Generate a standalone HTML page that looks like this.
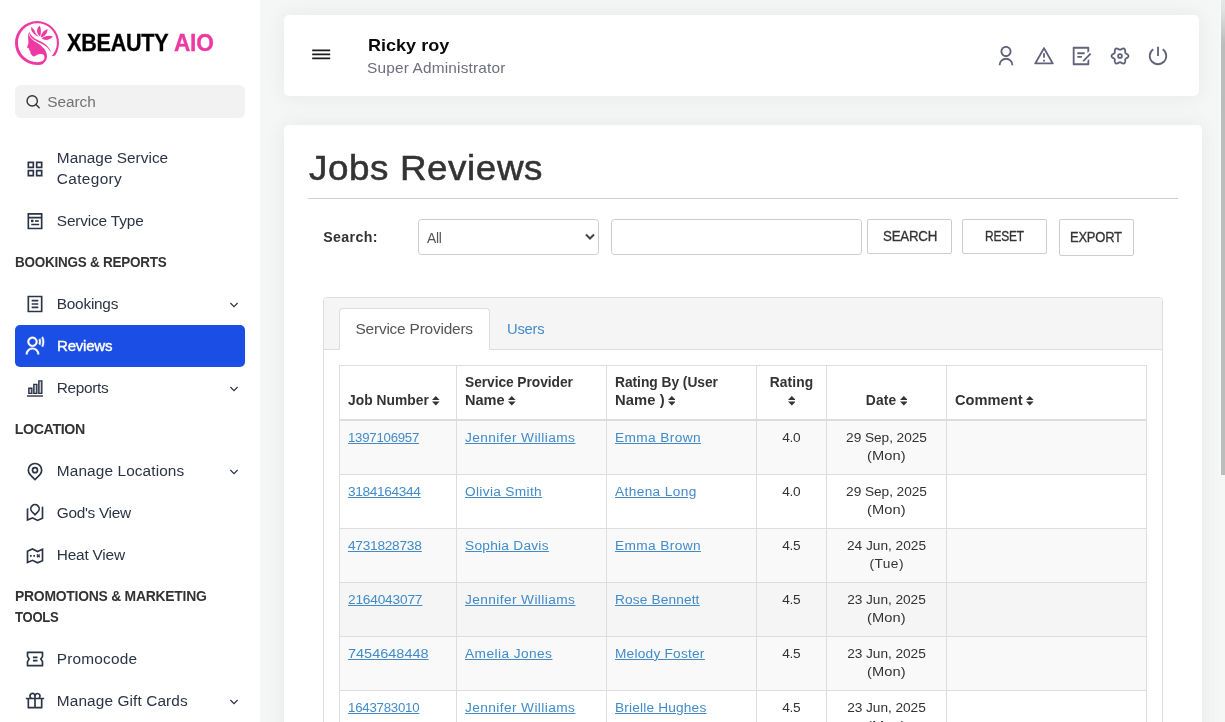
<!DOCTYPE html>
<html lang="en">
<head>
<meta charset="utf-8">
<title>Jobs Reviews</title>
<style>
*{box-sizing:border-box;}
html,body{margin:0;padding:0;}
body{width:1225px;height:722px;overflow:hidden;position:relative;background:#f5f6f6;font-family:"Liberation Sans",sans-serif;color:#333;}
a{color:#428bca;text-decoration:underline;text-underline-offset:1px;}
span{white-space:nowrap;}
a span{text-decoration:underline;text-underline-offset:1px;}
/* ---------- sidebar ---------- */
#wrap{position:absolute;left:0;top:0;width:1225px;height:722px;will-change:transform;}
#side{position:absolute;left:0;top:0;width:260px;height:722px;background:#fff;overflow:hidden;}
#logo{position:absolute;left:15px;top:21px;width:44px;height:44px;}
#brand{position:absolute;left:67px;top:29.6px;font-size:23.9px;line-height:26px;font-weight:700;color:#000;white-space:nowrap;-webkit-text-stroke:.35px #000;}
#brand b{color:#ee38a2;position:absolute;left:107.3px;top:0;-webkit-text-stroke:.35px #ee38a2;}
#sbox{position:absolute;left:15px;top:85px;width:230px;height:33px;border-radius:6px;background:#f2f2f2;}
#sbox svg{position:absolute;left:10px;top:8.5px;}
#sbox span{position:absolute;left:32.3px;top:.5px;line-height:32px;font-size:15.4px;color:#727272;}
#menu{position:absolute;left:15px;top:137px;width:230px;}
.it{position:relative;height:42px;border-radius:5px;color:#2b3445;font-size:15.4px;line-height:21px;}
.it.two{height:63px;}
.it svg.ic{position:absolute;left:10px;top:11px;width:20px;height:20px;fill:none;stroke:#2b3445;stroke-width:2;}
.it.two svg.ic{top:21.8px;}
.it span{position:absolute;left:41.8px;top:9.5px;}
.it.two span.l2{top:30.5px;}
.it svg.ch{position:absolute;left:213.2px;top:17.5px;width:12px;height:8px;}
.it.act{background:#1b4ee4;color:#fff;}
.it.act span{-webkit-text-stroke:.4px #fff;}
.it.act svg.ic{stroke:#fff;stroke-width:.5;fill:#fff;}
.hd{position:relative;height:41px;font-size:14.2px;font-weight:700;color:#333;line-height:21px;}
.hd span{position:absolute;left:-.3px;top:10px;}
.hd span.l2{top:31px;}
.hd.two{height:62px;}
/* ---------- top bar ---------- */
#top{position:absolute;left:284px;top:15px;width:915px;height:81px;background:#fff;border-radius:5px;box-shadow:0 0 18px rgba(196,204,204,.3);}
#burger{position:absolute;left:28px;top:32px;width:19px;height:14px;}
#uname{position:absolute;left:83.6px;top:21px;font-size:17px;line-height:20px;font-weight:700;color:#0a0a0a;}
#urole{position:absolute;left:82.8px;top:43px;font-size:14.4px;line-height:20px;color:#6e6e80;}
.ti{position:absolute;top:30.2px;width:22px;height:22px;fill:#62627a;}
/* ---------- main ---------- */
#main{position:absolute;left:284px;top:125px;width:918px;height:620px;background:#fff;border-radius:5px 5px 0 0;box-shadow:0 0 18px rgba(196,204,204,.3);}
h1{position:absolute;left:25px;top:21.5px;margin:0;font-size:34.4px;line-height:42px;font-weight:400;color:#333;white-space:nowrap;-webkit-text-stroke:.55px #333;}
#hr{position:absolute;left:24px;top:73px;width:870px;height:1px;background:#cfcfcf;}
#lbl{position:absolute;left:39.3px;top:102px;font-size:14.2px;font-weight:700;line-height:20px;color:#333;}
.ctl{position:absolute;top:94px;height:36px;border:1px solid #ccc;border-radius:3.500px;background:#fff;}
#sel span{position:absolute;left:7.7px;top:7.5px;font-size:14.2px;line-height:20px;color:#555;}
#sel svg{position:absolute;right:2px;top:12.8px;}
.btn{position:absolute;top:94px;height:35px;border:1px solid #ccc;border-radius:2px;background:#fff;font-size:14.2px;line-height:20px;color:#333;-webkit-text-stroke:.3px #333;}
.btn span{position:absolute;top:6px;}
/* panel */
#panel{position:absolute;left:39px;top:172px;width:840px;height:460px;border:1px solid #ddd;border-radius:4px 4px 0 0;background:#fff;}
#phead{position:absolute;left:0;top:0;width:838px;height:52px;background:#f5f5f5;border-bottom:1px solid #ddd;border-radius:3px 3px 0 0;}
#tab1{position:absolute;left:15px;top:10px;width:151px;height:42px;background:#fff;border:1px solid #ddd;border-bottom-color:#fff;border-radius:4px 4px 0 0;font-size:15.4px;line-height:20px;color:#555;}
#tab1 span{position:absolute;left:15.5px;top:10px;}
#tab2{position:absolute;left:182.8px;top:21px;font-size:15.4px;line-height:20px;color:#428bca;}
table{position:absolute;left:15px;top:67px;width:807px;border-collapse:collapse;table-layout:fixed;font-size:13.3px;line-height:18px;color:#333;}
th,td{border:1px solid #ddd;padding:8px 8px;vertical-align:top;text-align:left;}
th{vertical-align:bottom;height:53px;font-size:13.8px;border-bottom:2px solid #ddd;font-weight:700;white-space:nowrap;padding-bottom:9px;padding-top:8px;}
td{height:54px;padding-top:8px;font-size:13.7px;}
tr.s td{background:#f9f9f9;}
tr.h td{background:#f5f5f5;}
.c{text-align:center;}
.so{display:inline-block;width:7.6px;height:9.6px;margin-left:3.4px;position:relative;top:.8px;fill:#333;}
#sbar{position:absolute;left:1221px;top:0;width:4px;height:475px;box-shadow:-1.5px 0 0 #f9f9f9;background:linear-gradient(#e6e6e6 0,#e2e2e2 9px,#bcbcbc 44px);}
</style>
</head>
<body><div id="wrap">
<div id="side">
  <svg id="logo" viewBox="0 0 44 44">
    <g fill="#ee38a2">
    <path fill-rule="evenodd" d="M22 0a22 22 0 1 0 0 44a22 22 0 1 0 0-44zM22.400 2.300a19.500 19.500 0 1 1 0 39a19.500 19.500 0 1 1 0-39z"/>
    <path d="M33.800 35.600L41.500 34.600L46 46L28 46L28.500 39.500z" fill="#fff"/>
    <path d="M13.600 11.300C13 13.500 13.100 15.800 13.200 17.900C13.300 19.600 13.500 21.200 13.400 22.600L12 26.600L14 27.600L14.300 29.300L15.400 30.600L15.400 32.200L16.900 34.200L18.300 35.600C19.200 35.300 20 34.800 20.900 34.400C22.100 33.800 23.400 33.300 24.600 33.100C25.600 32.900 26.600 32.900 27.300 33.200C28.400 33.600 29.100 34.300 29.300 35.200C29.600 36.400 29.500 37.600 28.900 38.600C28.400 39.500 27.600 40.200 26.600 40.600C25.600 41.100 24.500 41.300 23.300 41.400L23 43.900C24.600 43.800 26 43.400 27.300 42.700C28.400 42.300 29.300 41.700 29.900 40.900C30.700 40 31.300 39 31.600 37.900C32 36.600 32.100 35.200 31.900 33.900C31.700 32.500 31.300 31.200 30.600 29.900C29.900 28.700 29 27.600 27.900 26.600C26.900 25.500 25.800 24.500 24.600 23.600C23.100 22.500 21.500 21.500 19.900 20.600C18.500 19.700 17.200 18.600 16 17.300C15.200 16.300 14.500 15.200 14 14C13.800 13.100 13.600 12.200 13.600 11.300z"/>
    <path d="M14.300 10.600C15.100 12.800 16.300 14.600 17.900 16C19.900 17.700 22.300 18.800 24.600 19.900C27 21 29.300 22.200 31.200 23.900C32.600 25.100 33.700 26.400 34.600 27.900C35.300 29.100 35.700 30.300 35.900 31.800C35.400 30.500 34.700 29.400 33.900 28.400C32.900 27.100 31.700 26 30.400 25.100C28.600 23.800 26.600 22.800 24.600 21.800C22.300 20.700 19.900 19.600 17.800 18C15.900 16.400 14.500 14.200 14.100 11.800z"/>
    <path d="M18.600 12.400C16.600 10.600 15.700 8.400 16.300 6C18.200 7.400 19.700 9.400 20.400 11.800C21 13 22.200 14.400 23.800 15.600C21.800 15 20 13.900 18.600 12.400z"/>
    <path d="M24.600 4.600C26.200 8 26.300 11.400 25.300 15.600C24.900 15.300 24.300 14.800 23.600 14.300C21.300 11.300 21.700 7.600 24.600 4.600z"/>
    <path d="M32.600 8C32.600 11.200 31.200 14 27.300 16.300L25.900 16.200C26 12.600 28.600 9.600 32.600 8z"/>
    <path d="M37.900 15.400C35.800 18 33 19.200 29.600 18.800C28.600 18.500 27.700 18 26.800 17.400C29.600 14.600 34.200 14.200 37.900 15.400z"/>
    </g>
  </svg>
  <div id="brand"><span style="display:inline-block;transform-origin:0 50%;transform:scaleX(0.902);letter-spacing:-0.25px;margin-right:-10.82px">XBEAUTY</span><b><span style="display:inline-block;transform-origin:0 50%;transform:scaleX(0.948);letter-spacing:-0.25px;margin-right:-1.93px">AIO</span></b></div>
  <div id="sbox"><svg width="17" height="17" viewBox="0 0 17 17"><circle cx="7.200" cy="6.900" r="5.150" fill="none" stroke="#333" stroke-width="1.400"/><path d="M10.900 10.600l3.300 3.200" stroke="#333" stroke-width="1.400" stroke-linecap="round"/></svg><span style="letter-spacing:-0.05px;margin-right:0.05px">Search</span></div>
  <div id="menu">
    <div class="it two"><svg class="ic" viewBox="0 0 24 24"><path d="M4 4h6v6H4zM14 4h6v6h-6zM4 14h6v6H4zM14 14h6v6h-6z"/></svg><span style="letter-spacing:0.01px;margin-right:-0.01px">Manage Service</span><span class="l2" style="letter-spacing:0.36px;margin-right:-0.36px">Category</span></div>
    <div class="it"><svg class="ic" viewBox="0 0 24 24"><path d="M4 3.4h16v17.6H4zM4 8h16M7.5 16.2h9.5"/><path d="M7.2 10.4h3v3h-3z" fill="#2b3445" stroke="none"/><path d="M12 12h4.5"/></svg><span style="letter-spacing:-0.16px;margin-right:0.16px">Service Type</span></div>
    <div class="hd"><span style="display:inline-block;transform-origin:0 50%;transform:scaleX(0.950);letter-spacing:-0.25px;margin-right:-7.67px">BOOKINGS &amp; REPORTS</span></div>
    <div class="it"><svg class="ic" viewBox="0 0 24 24"><path d="M4 3h16v18H4zM8 8h8M8 12h8M8 16h8"/></svg><span style="letter-spacing:-0.25px;margin-right:0.25px">Bookings</span><svg class="ch" viewBox="0 0 12 8"><path d="M2.4 2l3.6 3.6L9.6 2" fill="none" stroke="#2b3445" stroke-width="1.200"/></svg></div>
    <div class="it act"><svg class="ic" viewBox="0 0 24 24"><path d="M1 22a8 8 0 1 1 16 0h-2a6 6 0 1 0-12 0H1zm8-9c-3.315 0-6-2.685-6-6s2.685-6 6-6 6 2.685 6 6-2.685 6-6 6zm0-2c2.21 0 4-1.79 4-4s-1.79-4-4-4-4 1.79-4 4 1.79 4 4 4zM21.548.784A13.942 13.942 0 0 1 23 7c0 2.233-.523 4.344-1.452 6.216l-1.645-1.196A11.955 11.955 0 0 0 21 7c0-1.807-.4-3.52-1.097-5.02L21.548.784zm-3.302 2.4A9.97 9.97 0 0 1 19 7a9.97 9.97 0 0 1-.754 3.816l-1.677-1.22A7.99 7.99 0 0 0 17 7a7.99 7.99 0 0 0-.43-2.596l1.676-1.22z"/></svg><span style="display:inline-block;transform-origin:0 50%;transform:scaleX(0.979);letter-spacing:-0.25px;margin-right:-0.92px">Reviews</span></div>
    <div class="it"><svg class="ic" viewBox="0 0 24 24"><path d="M4.6 12.2h3.6v6.2H4.6zM10.6 7.6h3.6v10.8h-3.6zM16.6 3.4h3.6v15h-3.6z" stroke-width="1.7" fill="#c9ccd2"/><path d="M2.4 21.6h19.2" stroke-width="1.7"/></svg><span style="letter-spacing:-0.32px;margin-right:0.32px">Reports</span><svg class="ch" viewBox="0 0 12 8"><path d="M2.4 2l3.6 3.6L9.6 2" fill="none" stroke="#2b3445" stroke-width="1.200"/></svg></div>
    <div class="hd"><span style="letter-spacing:-0.36px;margin-right:0.36px">LOCATION</span></div>
    <div class="it"><svg class="ic" viewBox="0 0 24 24"><path d="M12 22.3l-5.66-5.66a8 8 0 1 1 11.32 0z"/><circle cx="12" cy="11" r="3"/></svg><span style="letter-spacing:0.11px;margin-right:-0.11px">Manage Locations</span><svg class="ch" viewBox="0 0 12 8"><path d="M2.4 2l3.6 3.6L9.6 2" fill="none" stroke="#2b3445" stroke-width="1.200"/></svg></div>
    <div class="it"><svg class="ic" viewBox="0 0 24 24" style="stroke:none;fill:#2b3445"><path d="M4 6.143v12.824l5.065-2.17 6 3L20 17.68V4.857l1.303-.558a.5.5 0 0 1 .697.46V19l-7 3-6-3-6.303 2.701a.5.5 0 0 1-.697-.46V7l2-.857zm12.243 5.1L12 15.485l-4.243-4.242a6 6 0 1 1 8.486 0zM12 12.657l2.828-2.829a4 4 0 1 0-5.656 0L12 12.657z"/></svg><span style="letter-spacing:-0.31px;margin-right:0.31px">God's View</span></div>
    <div class="it"><svg class="ic" viewBox="0 0 24 24"><path d="M3 7.400l6-2.600 6 3 6-2.600v13.600l-6 2.600-6-3-6 2.600z"/><path d="M6 13h2M10 13h2" /><path d="M14.3 11.3l3.4 3.4M17.7 11.3l-3.4 3.4" stroke-width="1.6"/></svg><span style="letter-spacing:-0.20px;margin-right:0.20px">Heat View</span></div>
    <div class="hd two"><span style="display:inline-block;transform-origin:0 50%;transform:scaleX(0.980);letter-spacing:-0.25px;margin-right:-3.70px">PROMOTIONS &amp; MARKETING</span><span class="l2" style="display:inline-block;transform-origin:0 50%;transform:scaleX(0.920);letter-spacing:-0.25px;margin-right:-3.58px">TOOLS</span></div>
    <div class="it"><svg class="ic" viewBox="0 0 24 24"><path d="M3 4h18v4.800l-2 3.200 2 3.200V20H3v-4.800l2-3.200L3 8.800z" stroke-linejoin="round"/><path d="M9.500 10h5.5M9.500 14h5.500"/></svg><span style="letter-spacing:0.19px;margin-right:-0.19px">Promocode</span></div>
    <div class="it"><svg class="ic" viewBox="0 0 24 24" style="stroke:none;fill:#2b3445"><path d="M15 2a4 4 0 0 1 3.464 6.001L23 8v2h-2v10a1 1 0 0 1-1 1H4a1 1 0 0 1-1-1V10H1V8l4.536.001A4 4 0 0 1 12 3.355 3.983 3.983 0 0 1 15 2zm-4 8H5v9h6v-9zm8 0h-6v9h6v-9zM9 4a2 2 0 0 0-.15 3.995L9 8h2V6a2 2 0 0 0-1.697-1.977l-.154-.018L9 4zm6 0a2 2 0 0 0-1.995 1.850L13 6v2h2a2 2 0 0 0 1.995-1.850L17 6a2 2 0 0 0-2-2z"/></svg><span style="letter-spacing:0.11px;margin-right:-0.11px">Manage Gift Cards</span><svg class="ch" viewBox="0 0 12 8"><path d="M2.4 2l3.6 3.6L9.6 2" fill="none" stroke="#2b3445" stroke-width="1.200"/></svg></div>
  </div>
</div>

<div id="top">
  <svg id="burger" viewBox="0 0 19 14"><path d="M.2 3.300h18M.2 7.300h18M.2 11.400h18" stroke="#1c1c1c" stroke-width="1.700" fill="none"/></svg>
  <div id="uname"><span style="display:inline-block;transform-origin:0 50%;transform:scaleX(1.061);letter-spacing:0.00px;margin-right:4.65px">Ricky roy</span></div>
  <div id="urole"><span style="display:inline-block;transform-origin:0 50%;transform:scaleX(1.070);letter-spacing:0.16px;margin-right:8.89px">Super Administrator</span></div>
  <svg class="ti" style="left:711px" viewBox="0 0 24 24"><path d="M4 22a8 8 0 1 1 16 0h-2a6 6 0 1 0-12 0H4zm8-9c-3.315 0-6-2.685-6-6s2.685-6 6-6 6 2.685 6 6-2.685 6-6 6zm0-2c2.210 0 4-1.790 4-4s-1.790-4-4-4-4 1.790-4 4 1.790 4 4 4z"/></svg>
  <svg class="ti" style="left:749px" viewBox="0 0 24 24"><path d="M12.866 3l9.526 16.500a1 1 0 0 1-.866 1.500H2.474a1 1 0 0 1-.866-1.500L11.134 3a1 1 0 0 1 1.732 0zM4.206 19h15.588L12 5.500 4.206 19zM11 16h2v2h-2v-2zm0-7h2v5h-2V9z"/></svg>
  <svg class="ti" style="left:786.2px" viewBox="0 0 24 24"><path d="M20 2a1 1 0 0 1 1 1v3.757l-2 2V4H5v16h14v-2.758l2-2V21a1 1 0 0 1-1 1H4a1 1 0 0 1-1-1V3a1 1 0 0 1 1-1h16zm1.778 6.808l1.414 1.414L15.414 18l-1.416-.002.002-1.412 7.778-7.778zM13 12v2H8v-2h5zm3-4v2H8V8h8z"/></svg>
  <svg class="ti" style="left:825px;fill:none;stroke:#62627a;stroke-width:2;stroke-linejoin:round" viewBox="0 0 24 24"><path d="M21.2 12.0L21.0 12.8L20.5 13.5L19.7 14.1L18.9 14.5L18.3 14.9L17.8 15.4L17.7 16.0L17.6 16.7L17.7 17.7L17.5 18.6L17.2 19.4L16.6 20.0L15.8 20.2L14.9 20.1L14.1 19.7L13.3 19.3L12.6 18.9L12.0 18.8L11.4 18.9L10.7 19.3L9.9 19.7L9.1 20.1L8.2 20.2L7.4 20.0L6.8 19.4L6.5 18.6L6.3 17.7L6.4 16.7L6.3 16.0L6.2 15.4L5.7 14.9L5.1 14.5L4.3 14.1L3.5 13.5L3.0 12.8L2.8 12.0L3.0 11.2L3.5 10.5L4.3 9.9L5.1 9.5L5.7 9.1L6.2 8.6L6.3 8.0L6.4 7.3L6.3 6.3L6.5 5.4L6.8 4.6L7.4 4.0L8.2 3.8L9.1 3.9L9.9 4.3L10.7 4.7L11.4 5.1L12.0 5.2L12.6 5.1L13.3 4.7L14.1 4.3L14.9 3.9L15.8 3.8L16.6 4.0L17.2 4.6L17.5 5.4L17.7 6.3L17.6 7.3L17.7 8.0L17.8 8.6L18.3 9.1L18.9 9.5L19.7 9.9L20.5 10.5L21.0 11.2Z"/><circle cx="12" cy="12" r="2.100"/></svg>
  <svg class="ti" style="left:863px" viewBox="0 0 24 24"><path d="M6.265 3.807l1.147 1.639a8 8 0 1 0 9.176 0l1.147-1.639A9.988 9.988 0 0 1 22 12c0 5.523-4.477 10-10 10S2 17.523 2 12a9.988 9.988 0 0 1 4.265-8.193zM11 12V2h2v10h-2z"/></svg>
</div>

<div id="main">
  <h1><span style="display:inline-block;transform-origin:0 50%;transform:scaleX(1.070);letter-spacing:0.55px;margin-right:14.72px">Jobs Reviews</span></h1>
  <div id="hr"></div>
  <div id="lbl"><span style="letter-spacing:0.36px;margin-right:-0.36px">Search:</span></div>
  <div class="ctl" id="sel" style="left:134px;width:181px;"><span style="display:inline-block;transform-origin:0 50%;transform:scaleX(0.975);letter-spacing:-0.25px;margin-right:-0.13px">All</span><svg width="12" height="8" viewBox="0 0 12 8"><path d="M2 1.500l4 4 4-4" fill="none" stroke="#444" stroke-width="2"/></svg></div>
  <div class="ctl" style="left:327px;width:251px;"></div>
  <div class="btn" style="left:583px;width:85px;"><span style="left:14.600px;display:inline-block;transform-origin:0 50%;transform:scaleX(0.938);letter-spacing:-0.25px;margin-right:-3.34px">SEARCH</span></div>
  <div class="btn" style="left:678px;width:85px;"><span style="left:22.400px;display:inline-block;transform-origin:0 50%;transform:scaleX(0.842);letter-spacing:-0.25px;margin-right:-7.06px">RESET</span></div>
  <div class="btn" style="left:775px;width:75px;height:37px;"><span style="left:10.400px;top:7px;display:inline-block;transform-origin:0 50%;transform:scaleX(0.915);letter-spacing:-0.25px;margin-right:-4.59px">EXPORT</span></div>
  <div id="panel">
    <div id="phead"></div>
    <div id="tab1"><span style="letter-spacing:-0.19px;margin-right:0.19px">Service Providers</span></div>
    <div id="tab2"><span style="display:inline-block;transform-origin:0 50%;transform:scaleX(0.957);letter-spacing:-0.25px;margin-right:-1.45px">Users</span></div>
    <table>
      <colgroup><col style="width:117px"><col style="width:150px"><col style="width:150px"><col style="width:70px"><col style="width:120px"><col style="width:200px"></colgroup>
      <tr><th><span style="letter-spacing:0.03px;margin-right:-0.03px">Job Number</span><svg class="so" viewBox="0 0 7.600 9.600"><path d="M0 4L3.800 0L7.600 4zM0 5.600L3.800 9.600L7.600 5.600z"/></svg></th><th><span style="letter-spacing:-0.07px;margin-right:0.07px">Service Provider</span><br><span style="display:inline-block;transform-origin:0 50%;transform:scaleX(1.056);letter-spacing:0.00px;margin-right:2.12px">Name</span><svg class="so" viewBox="0 0 7.600 9.600"><path d="M0 4L3.800 0L7.600 4zM0 5.600L3.800 9.600L7.600 5.600z"/></svg></th><th><span style="letter-spacing:-0.04px;margin-right:0.04px">Rating By (User</span><br><span style="display:inline-block;transform-origin:0 50%;transform:scaleX(1.070);letter-spacing:0.07px;margin-right:3.18px">Name )</span><svg class="so" style="margin-left:2.9px" viewBox="0 0 7.600 9.600"><path d="M0 4L3.800 0L7.600 4zM0 5.600L3.800 9.600L7.600 5.600z"/></svg></th><th class="c"><span style="letter-spacing:0.10px;margin-right:-0.10px">Rating</span><br><svg class="so" style="margin-left:0" viewBox="0 0 7.600 9.600"><path d="M0 4L3.800 0L7.600 4zM0 5.600L3.800 9.600L7.600 5.600z"/></svg></th><th class="c"><span style="letter-spacing:0.20px;margin-right:-0.20px">Date</span><svg class="so" viewBox="0 0 7.600 9.600"><path d="M0 4L3.800 0L7.600 4zM0 5.600L3.800 9.600L7.600 5.600z"/></svg></th><th><span style="display:inline-block;transform-origin:0 50%;transform:scaleX(1.062);letter-spacing:0.00px;margin-right:3.97px">Comment</span><svg class="so" viewBox="0 0 7.600 9.600"><path d="M0 4L3.800 0L7.600 4zM0 5.600L3.800 9.600L7.600 5.600z"/></svg></th></tr>
      <tr class="s"><td><a><span style="display:inline-block;transform-origin:0 50%;transform:scaleX(0.965);letter-spacing:-0.25px;margin-right:-2.33px">1397106957</span></a></td><td><a><span style="letter-spacing:0.40px;margin-right:-0.40px">Jennifer Williams</span></a></td><td><a><span style="letter-spacing:0.38px;margin-right:-0.38px">Emma Brown</span></a></td><td class="c"><span style="letter-spacing:-0.32px;margin-right:0.32px">4.0</span></td><td class="c"><span style="letter-spacing:-0.06px;margin-right:0.06px">29 Sep, 2025</span><br><span style="display:inline-block;transform-origin:0 50%;transform:scaleX(1.070);letter-spacing:0.08px;margin-right:2.44px">(Mon)</span></td><td></td></tr>
      <tr><td><a><span style="letter-spacing:-0.36px;margin-right:0.36px">3184164344</span></a></td><td><a><span style="letter-spacing:0.33px;margin-right:-0.33px">Olivia Smith</span></a></td><td><a><span style="letter-spacing:0.37px;margin-right:-0.37px">Athena Long</span></a></td><td class="c"><span style="letter-spacing:-0.32px;margin-right:0.32px">4.0</span></td><td class="c"><span style="letter-spacing:-0.06px;margin-right:0.06px">29 Sep, 2025</span><br><span style="display:inline-block;transform-origin:0 50%;transform:scaleX(1.070);letter-spacing:0.08px;margin-right:2.44px">(Mon)</span></td><td></td></tr>
      <tr class="s"><td><a><span style="letter-spacing:-0.26px;margin-right:0.26px">4731828738</span></a></td><td><a><span style="letter-spacing:0.26px;margin-right:-0.26px">Sophia Davis</span></a></td><td><a><span style="letter-spacing:0.38px;margin-right:-0.38px">Emma Brown</span></a></td><td class="c"><span style="letter-spacing:-0.32px;margin-right:0.32px">4.5</span></td><td class="c"><span style="letter-spacing:-0.01px;margin-right:0.01px">24 Jun, 2025</span><br><span style="letter-spacing:0.45px;margin-right:-0.45px">(Tue)</span></td><td></td></tr>
      <tr class="h"><td><a><span style="letter-spacing:-0.19px;margin-right:0.19px">2164043077</span></a></td><td><a><span style="letter-spacing:0.40px;margin-right:-0.40px">Jennifer Williams</span></a></td><td><a><span style="letter-spacing:0.13px;margin-right:-0.13px">Rose Bennett</span></a></td><td class="c"><span style="letter-spacing:-0.32px;margin-right:0.32px">4.5</span></td><td class="c"><span style="letter-spacing:-0.05px;margin-right:0.05px">23 Jun, 2025</span><br><span style="display:inline-block;transform-origin:0 50%;transform:scaleX(1.070);letter-spacing:0.08px;margin-right:2.44px">(Mon)</span></td><td></td></tr>
      <tr class="s"><td><a><span style="display:inline-block;transform-origin:0 50%;transform:scaleX(1.059);letter-spacing:0.00px;margin-right:4.47px">7454648448</span></a></td><td><a><span style="letter-spacing:0.43px;margin-right:-0.43px">Amelia Jones</span></a></td><td><a><span style="letter-spacing:0.22px;margin-right:-0.22px">Melody Foster</span></a></td><td class="c"><span style="letter-spacing:-0.32px;margin-right:0.32px">4.5</span></td><td class="c"><span style="letter-spacing:-0.05px;margin-right:0.05px">23 Jun, 2025</span><br><span style="display:inline-block;transform-origin:0 50%;transform:scaleX(1.070);letter-spacing:0.08px;margin-right:2.44px">(Mon)</span></td><td></td></tr>
      <tr><td><a><span style="display:inline-block;transform-origin:0 50%;transform:scaleX(0.969);letter-spacing:-0.25px;margin-right:-2.03px">1643783010</span></a></td><td><a><span style="letter-spacing:0.40px;margin-right:-0.40px">Jennifer Williams</span></a></td><td><a><span style="letter-spacing:0.17px;margin-right:-0.17px">Brielle Hughes</span></a></td><td class="c"><span style="letter-spacing:-0.32px;margin-right:0.32px">4.5</span></td><td class="c"><span style="letter-spacing:-0.05px;margin-right:0.05px">23 Jun, 2025</span><br><span style="display:inline-block;transform-origin:0 50%;transform:scaleX(1.070);letter-spacing:0.08px;margin-right:2.44px">(Mon)</span></td><td></td></tr>
    </table>
  </div>
</div>
<div id="sbar"></div>
</div></body>
</html>
